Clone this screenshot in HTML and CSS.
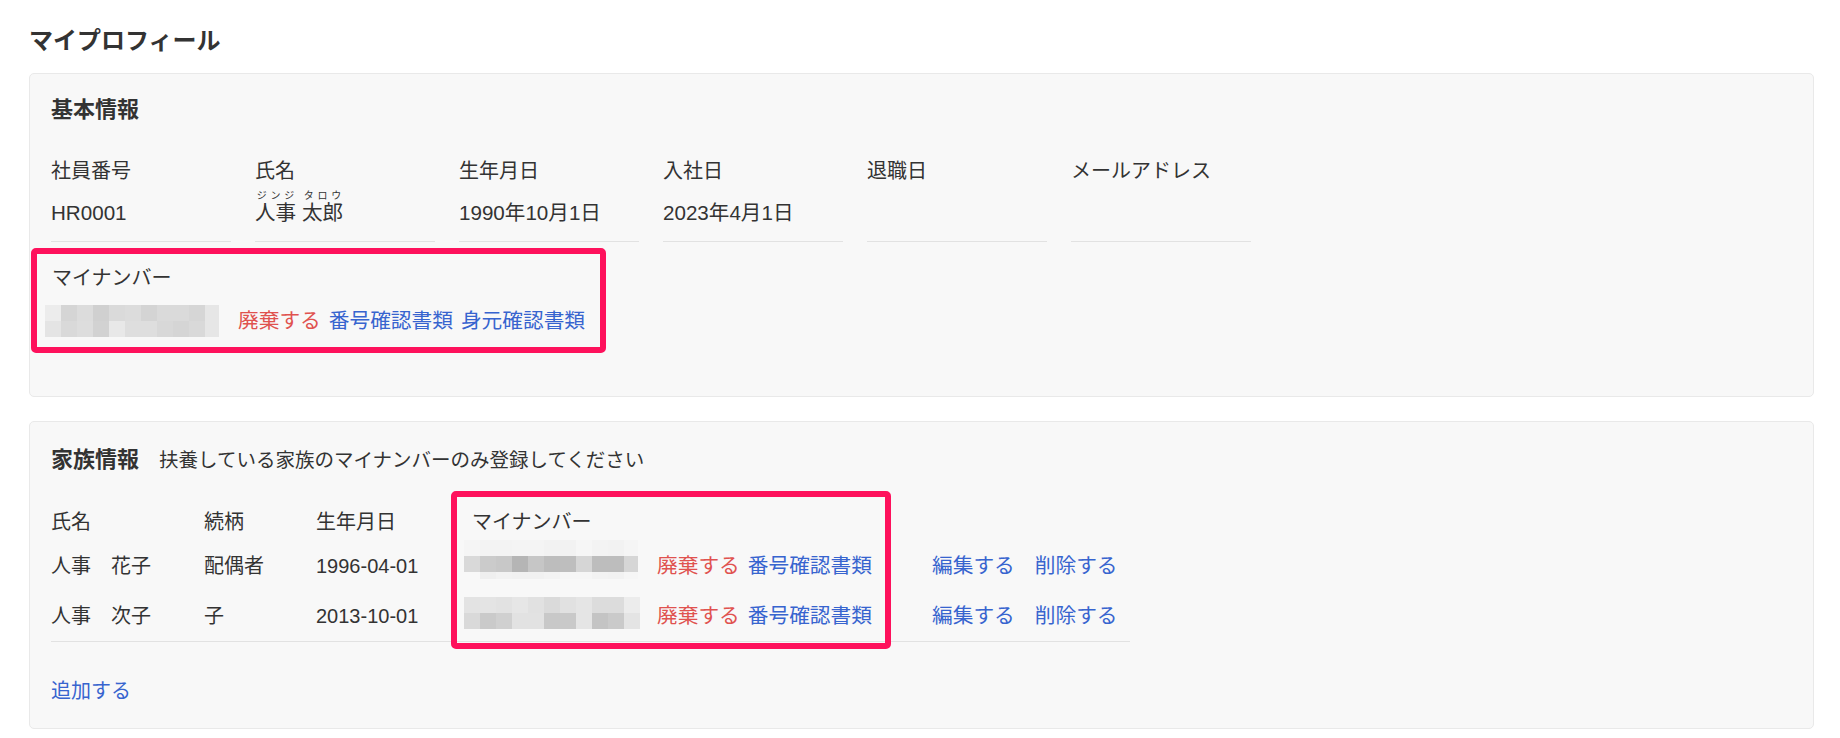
FILE: index.html
```html
<!DOCTYPE html>
<html lang="ja">
<head>
    <meta charset="UTF-8">
    <title>マイプロフィール</title>
    <link rel="stylesheet" href="styles.css">
</head>
<body>
<div class="page">
    <h1 class="page-title">マイプロフィール</h1>

    <section class="card">
        <h2 class="card-title">基本情報</h2>
        <div class="fields">
            <div class="field">
                <div class="field-label">社員番号</div>
                <div class="field-value">HR0001</div>
            </div>
            <div class="field">
                <div class="field-label">氏名</div>
                <div class="field-value"><span><ruby>人事<rt>ジンジ</rt></ruby> <ruby>太郎<rt>タロウ</rt></ruby></span></div>
            </div>
            <div class="field">
                <div class="field-label">生年月日</div>
                <div class="field-value">1990年10月1日</div>
            </div>
            <div class="field">
                <div class="field-label">入社日</div>
                <div class="field-value">2023年4月1日</div>
            </div>
            <div class="field">
                <div class="field-label">退職日</div>
                <div class="field-value"></div>
            </div>
            <div class="field">
                <div class="field-label">メールアドレス</div>
                <div class="field-value"></div>
            </div>
        </div>

        <div class="mynumber highlight">
            <div class="mynumber-label">マイナンバー</div>
            <div class="mynumber-row">
                <svg class="mosaic" width="174" height="32" viewBox="0 0 174 32">
                    <rect x="0" y="0" width="16" height="16" fill="#ececec"/>
                    <rect x="16" y="0" width="16" height="16" fill="#d5d5d5"/>
                    <rect x="32" y="0" width="16" height="16" fill="#dcdcdc"/>
                    <rect x="48" y="0" width="16" height="16" fill="#d0d0d0"/>
                    <rect x="64" y="0" width="16" height="16" fill="#dadada"/>
                    <rect x="80" y="0" width="16" height="16" fill="#dcdcdc"/>
                    <rect x="96" y="0" width="16" height="16" fill="#d4d4d4"/>
                    <rect x="112" y="0" width="16" height="16" fill="#dadada"/>
                    <rect x="128" y="0" width="16" height="16" fill="#dadada"/>
                    <rect x="144" y="0" width="16" height="16" fill="#d6d6d6"/>
                    <rect x="160" y="0" width="14" height="16" fill="#e6e6e6"/>
                    <rect x="0" y="16" width="16" height="16" fill="#e4e4e4"/>
                    <rect x="16" y="16" width="16" height="16" fill="#d9d9d9"/>
                    <rect x="32" y="16" width="16" height="16" fill="#dddddd"/>
                    <rect x="48" y="16" width="16" height="16" fill="#d2d2d2"/>
                    <rect x="64" y="16" width="16" height="16" fill="#e8e8e8"/>
                    <rect x="80" y="16" width="16" height="16" fill="#dedede"/>
                    <rect x="96" y="16" width="16" height="16" fill="#dedede"/>
                    <rect x="112" y="16" width="16" height="16" fill="#d8d8d8"/>
                    <rect x="128" y="16" width="16" height="16" fill="#d5d5d5"/>
                    <rect x="144" y="16" width="16" height="16" fill="#d9d9d9"/>
                    <rect x="160" y="16" width="14" height="16" fill="#e6e6e6"/>
                </svg>
                <a class="link danger first" href="#">廃棄する</a>
                <a class="link" href="#">番号確認書類</a>
                <a class="link" href="#">身元確認書類</a>
            </div>
        </div>
    </section>

    <section class="card">
        <div class="card-head">
            <h2 class="card-title">家族情報</h2>
            <span class="card-note">扶養している家族のマイナンバーのみ登録してください</span>
        </div>

        <div class="family">
            <div class="family-grid">
                <div class="cell head">氏名</div>
                <div class="cell head">続柄</div>
                <div class="cell head">生年月日</div>
                <div class="cell head mynumber-head">マイナンバー</div>
                <div class="cell head"></div>

                <div class="cell">人事　花子</div>
                <div class="cell">配偶者</div>
                <div class="cell">1996-04-01</div>
                <div class="cell mynumber-cell">
                    <svg class="mosaic mosaic-tall" width="174" height="39" viewBox="0 0 174 39">
                        <rect x="0" y="0" width="16" height="16" fill="#f5f5f5"/>
                        <rect x="16" y="0" width="16" height="16" fill="#f3f3f3"/>
                        <rect x="32" y="0" width="16" height="16" fill="#f3f3f3"/>
                        <rect x="48" y="0" width="16" height="16" fill="#f4f4f4"/>
                        <rect x="64" y="0" width="16" height="16" fill="#f4f4f4"/>
                        <rect x="80" y="0" width="16" height="16" fill="#f2f2f2"/>
                        <rect x="96" y="0" width="16" height="16" fill="#f2f2f2"/>
                        <rect x="112" y="0" width="16" height="16" fill="#f6f6f6"/>
                        <rect x="128" y="0" width="16" height="16" fill="#f3f3f3"/>
                        <rect x="144" y="0" width="16" height="16" fill="#f2f2f2"/>
                        <rect x="160" y="0" width="14" height="16" fill="#f5f5f5"/>
                        <rect x="0" y="16" width="16" height="16" fill="#d9d9d9"/>
                        <rect x="16" y="16" width="16" height="16" fill="#cbcbcb"/>
                        <rect x="32" y="16" width="16" height="16" fill="#c8c8c8"/>
                        <rect x="48" y="16" width="16" height="16" fill="#b5b5b5"/>
                        <rect x="64" y="16" width="16" height="16" fill="#c6c6c6"/>
                        <rect x="80" y="16" width="16" height="16" fill="#bdbdbd"/>
                        <rect x="96" y="16" width="16" height="16" fill="#bebebe"/>
                        <rect x="112" y="16" width="16" height="16" fill="#d6d6d6"/>
                        <rect x="128" y="16" width="16" height="16" fill="#bdbdbd"/>
                        <rect x="144" y="16" width="16" height="16" fill="#bdbdbd"/>
                        <rect x="160" y="16" width="14" height="16" fill="#d6d6d6"/>
                        <rect x="0" y="32" width="16" height="7" fill="#f8f8f8"/>
                        <rect x="16" y="32" width="16" height="7" fill="#efefef"/>
                        <rect x="32" y="32" width="16" height="7" fill="#f2f2f2"/>
                        <rect x="48" y="32" width="16" height="7" fill="#f1f1f1"/>
                        <rect x="64" y="32" width="16" height="7" fill="#f1f1f1"/>
                        <rect x="80" y="32" width="16" height="7" fill="#f3f3f3"/>
                        <rect x="96" y="32" width="16" height="7" fill="#f6f6f6"/>
                        <rect x="112" y="32" width="16" height="7" fill="#f6f6f6"/>
                        <rect x="128" y="32" width="16" height="7" fill="#f3f3f3"/>
                        <rect x="144" y="32" width="16" height="7" fill="#f2f2f2"/>
                        <rect x="160" y="32" width="14" height="7" fill="#f6f6f6"/>
                    </svg>
                    <a class="link danger first" href="#">廃棄する</a>
                    <a class="link" href="#">番号確認書類</a>
                </div>
                <div class="cell actions">
                    <a class="link" href="#">編集する</a>
                    <a class="link" href="#">削除する</a>
                </div>

                <div class="cell">人事　次子</div>
                <div class="cell">子</div>
                <div class="cell">2013-10-01</div>
                <div class="cell mynumber-cell">
                    <svg class="mosaic mosaic-low" width="176" height="32" viewBox="0 0 176 32">
                        <rect x="0" y="0" width="16" height="16" fill="#e3e3e3"/>
                        <rect x="16" y="0" width="16" height="16" fill="#e4e4e4"/>
                        <rect x="32" y="0" width="16" height="16" fill="#e2e2e2"/>
                        <rect x="48" y="0" width="16" height="16" fill="#e6e6e6"/>
                        <rect x="64" y="0" width="16" height="16" fill="#e1e1e1"/>
                        <rect x="80" y="0" width="16" height="16" fill="#dadada"/>
                        <rect x="96" y="0" width="16" height="16" fill="#e1e1e1"/>
                        <rect x="112" y="0" width="16" height="16" fill="#e5e5e5"/>
                        <rect x="128" y="0" width="16" height="16" fill="#dcdcdc"/>
                        <rect x="144" y="0" width="16" height="16" fill="#dcdcdc"/>
                        <rect x="160" y="0" width="16" height="16" fill="#ececec"/>
                        <rect x="0" y="16" width="16" height="16" fill="#d9d9d9"/>
                        <rect x="16" y="16" width="16" height="16" fill="#cacaca"/>
                        <rect x="32" y="16" width="16" height="16" fill="#d0d0d0"/>
                        <rect x="48" y="16" width="16" height="16" fill="#e2e2e2"/>
                        <rect x="64" y="16" width="16" height="16" fill="#e2e2e2"/>
                        <rect x="80" y="16" width="16" height="16" fill="#c8c8c8"/>
                        <rect x="96" y="16" width="16" height="16" fill="#c9c9c9"/>
                        <rect x="112" y="16" width="16" height="16" fill="#e5e5e5"/>
                        <rect x="128" y="16" width="16" height="16" fill="#c4c4c4"/>
                        <rect x="144" y="16" width="16" height="16" fill="#cacaca"/>
                        <rect x="160" y="16" width="16" height="16" fill="#e4e4e4"/>
                    </svg>
                    <a class="link danger first-low" href="#">廃棄する</a>
                    <a class="link" href="#">番号確認書類</a>
                </div>
                <div class="cell actions">
                    <a class="link" href="#">編集する</a>
                    <a class="link" href="#">削除する</a>
                </div>
            </div>
            <div class="highlight-overlay"></div>
        </div>

        <a class="link add" href="#">追加する</a>
    </section>
</div>
</body>
</html>
```

FILE: styles.css
```css
*{
    margin: 0;
    padding: 0;
    box-sizing: border-box;
}
body{
    background-color: #fff;
    color: #333;
    font-family: "Liberation Sans", "Noto Sans CJK JP", sans-serif;
    font-size: 20px;
}
a{
    text-decoration: none;
}
.page{
    padding: 23px 26px 0 29px;
}
.page-title{
    font-size: 24px;
    line-height: 36px;
    font-weight: bold;
    margin-bottom: 14px;
}
.card{
    background-color: #f8f8f8;
    border: 1px solid #e9e9e9;
    border-radius: 5px;
    padding: 22px 21px 43px 21px;
    margin-bottom: 24px;
}
.card-title{
    font-size: 22px;
    line-height: 28px;
    font-weight: bold;
}
.card-head{
    display: flex;
    align-items: baseline;
    gap: 20px;
}
.card-note{
    font-size: 19.5px;
}

/* basic info */
.fields{
    display: flex;
    gap: 24px;
    margin-top: 32px;
}
.field{
    width: 180px;
}
.field-label{
    line-height: 30px;
}
.field-value{
    height: 56px;
    font-size: 20.6px;
    line-height: 30px;
    display: flex;
    align-items: flex-end;
    padding-bottom: 13px;
    border-bottom: 1px solid #e2e2e2;
}
rt{
    font-size: 10px;
    line-height: 12px;
}

/* mynumber annotation */
.highlight{
    border: 6px solid #fe115c;
    border-radius: 5px;
}
.mynumber{
    width: fit-content;
    margin: 6px 0 0 -20px;
    padding: 9px 15px 10px 8px;
}
.mynumber-label{
    line-height: 30px;
    padding-left: 7px;
}
.mynumber-row{
    display: flex;
    align-items: center;
    height: 32px;
    margin-top: 12px;
}
.mosaic{
    display: block;
    flex: none;
}
.link{
    color: #3764cf;
    font-size: 20.7px;
    line-height: 30px;
    margin-left: 8px;
    white-space: nowrap;
}
.link.danger{
    color: #e0524f;
}
.link.first{
    margin-left: 19px;
}
.link.first-low{
    margin-left: 17px;
}

/* family */
.family{
    position: relative;
    margin-top: 32px;
    width: 1079px;
}
.family-grid{
    display: grid;
    grid-template-columns: 153px 112px 148px 468px 198px;
    grid-template-rows: 34px 51px 50px;
    border-bottom: 1px solid #e2e2e2;
}
.cell{
    display: flex;
    align-items: center;
    line-height: 30px;
    white-space: nowrap;
}
.cell.head{
    align-items: flex-start;
    padding-top: 1px;
}
.mynumber-head{
    padding-left: 8px;
}
.mynumber-cell .mosaic-tall{
    align-self: flex-start;
    margin-bottom: 12px;
}
.mynumber-cell .mosaic-low{
    align-self: flex-start;
    margin-top: 6px;
}
.actions{
    gap: 20px;
}
.actions .link{
    margin-left: 0;
}
.highlight-overlay{
    position: absolute;
    left: 400px;
    top: -15px;
    width: 440px;
    height: 158px;
    border: 6px solid #fe115c;
    border-radius: 5px;
    pointer-events: none;
}
.link.add{
    display: inline-block;
    font-size: 20px;
    margin: 34px 0 0 0;
}
.card:last-child{
    padding-bottom: 22px;
}
```
